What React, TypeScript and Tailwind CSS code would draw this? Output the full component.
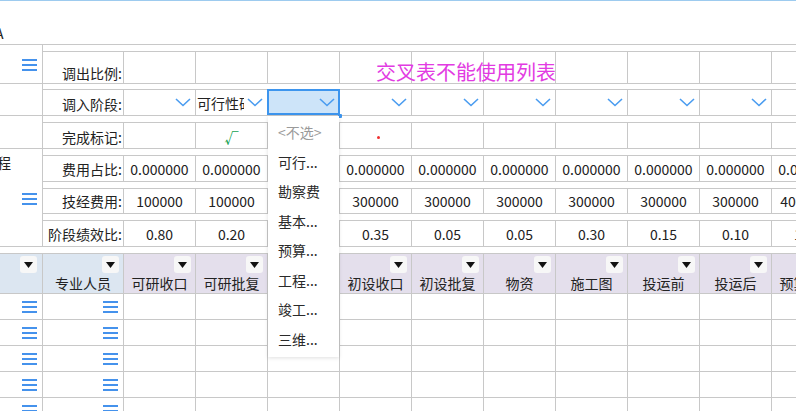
import React from "react";

const fees = ["0.000000", "0.000000", "", "0.000000", "0.000000", "0.000000", "0.000000", "0.000000", "0.000000", "0.000000", "0.000000"];
const costs = ["100000", "100000", "", "300000", "300000", "300000", "300000", "300000", "300000", "4000000", "300000"];
const ratios = ["0.80", "0.20", "", "0.35", "0.05", "0.05", "0.30", "0.15", "0.10", "1.00", "0.00"];
const heads = ["可研收口", "可研批复", "", "初设收口", "初设批复", "物资", "施工图", "投运前", "投运后", "预算评审", "结算"];
const menuItems = ["可行...", "勘察费", "基本...", "预算...", "工程...", "竣工...", "三维..."];

// ---------------- ICONS ----------------
function MenuIcon() {
  return (
    <svg width="15" height="12" viewBox="0 0 15 12">
      <rect x="0" y="0" width="15" height="2" fill="#4592ec" />
      <rect x="0" y="5" width="15" height="2" fill="#4592ec" />
      <rect x="0" y="10" width="15" height="2" fill="#4592ec" />
    </svg>
  );
}

function Chevron() {
  return (
    <svg width="16" height="9" viewBox="0 0 16 9">
      <polyline points="1,1 8,7.5 15,1" fill="none" stroke="#4a9cf0" strokeWidth="1.6" />
    </svg>
  );
}

function FilterBtn() {
  return (
    <div className="w-[17px] h-[17px] rounded-[3px] bg-[#f7f7f7] flex items-center justify-center">
      <svg width="9" height="6" viewBox="0 0 9 6">
        <polygon points="0,0 9,0 4.5,6" fill="#111" />
      </svg>
    </div>
  );
}

function ValueRow({ label, values }: { label: string; values: string[] }) {
  return (
    <>
      <div className="w-[81px] shrink-0 border-r border-[#c8c8c8] flex items-center justify-end pr-[1px] leading-[20px]">
        {label}
      </div>
      {values.map((v, i) => (
        <div
          key={i}
          className="w-[72px] shrink-0 border-r border-[#c8c8c8] flex items-center justify-center leading-[20px]"
        >
          {v}
        </div>
      ))}
    </>
  );
}

export default function App() {
  return (
    <div className="w-[796px] h-[411px] overflow-hidden bg-white border-t border-[#9dcbef] font-['Noto_Sans_CJK_SC','Noto_Sans',sans-serif] text-[14px] text-[#222]">
      {/* ================= TOP ================= */}
      <div className="h-[44px] border-b border-[#c8c8c8] pt-[22px] leading-[20px]">
        <span className="ml-[-5px]">A</span>
      </div>

      {/* 调出比例 */}
      <div className="flex w-max h-[39px] border-b border-[#c8c8c8]">
        <div className="w-[43px] shrink-0 border-r border-[#c8c8c8] flex justify-end pr-[5px] pt-[14px]">
          <MenuIcon />
        </div>
        <div className="pt-[6px]">
          <div className="relative flex h-[32px] border-t border-[#c8c8c8]">
            <div className="w-[81px] shrink-0 border-r border-[#c8c8c8] flex items-end justify-end pr-[1px] leading-[20px]">
              调出比例:
            </div>
            {fees.map((_, i) => (
              <div key={i} className="w-[72px] shrink-0 border-r border-[#c8c8c8]" />
            ))}
            <span className="absolute left-[333px] top-[8px] text-[20px] leading-[24px] text-[#e23be2] whitespace-nowrap">
              交叉表不能使用列表
            </span>
          </div>
        </div>
      </div>

      {/* 调入阶段 */}
      <div className="flex w-max h-[32px] border-b border-[#c8c8c8]">
        <div className="w-[43px] shrink-0 border-r border-[#c8c8c8]" />
        <div className="pt-[5px]">
          <div className="flex h-[26px] border-t border-[#c8c8c8]">
            <div className="w-[81px] shrink-0 border-r border-[#c8c8c8] flex items-center justify-end pr-[1px] pt-[3px] leading-[20px]">
              调入阶段:
            </div>
            {fees.map((_, i) => {
              if (i === 1) {
                return (
                  <div key={i} className="w-[72px] shrink-0 border-r border-[#c8c8c8] flex items-center pl-[1px] pr-[4px]">
                    <span className="flex-1 overflow-hidden whitespace-nowrap mr-[3px] leading-[20px]">可行性研究</span>
                    <Chevron />
                  </div>
                );
              }
              if (i === 2) {
                return (
                  <div key={i} className="relative w-[72px] shrink-0 border-r border-[#c8c8c8]">
                    <div className="absolute left-[-1px] top-[-1px] w-[73px] h-[26px] border-2 border-[#3d95ee] bg-[#cde4f9] flex items-center justify-end pr-[3px]">
                      <Chevron />
                    </div>
                    <div className="absolute left-[70px] top-[24px] w-[4px] h-[4px] rounded-[1px] bg-[#3d95ee]" />
                    {/* ---------- DROPDOWN ---------- */}
                    <div className="absolute left-0 top-[26px] w-[71px] h-[241px] bg-white shadow-[0_1px_4px_rgba(0,0,0,0.13)] pt-[2px] z-30">
                      <div className="h-[29.5px] flex items-center pl-[10px] text-[#9a9a9a]">&lt;不选&gt;</div>
                      {menuItems.map((m) => (
                        <div key={m} className="h-[29.5px] flex items-center pl-[10px] text-[#2a2a2a]">
                          {m}
                        </div>
                      ))}
                    </div>
                  </div>
                );
              }
              return (
                <div key={i} className="w-[72px] shrink-0 border-r border-[#c8c8c8] flex items-center justify-end pr-[4px]">
                  <Chevron />
                </div>
              );
            })}
          </div>
        </div>
      </div>

      {/* 完成标记 */}
      <div className="flex w-max h-[33px] border-b border-[#c8c8c8]">
        <div className="w-[43px] shrink-0 border-r border-[#c8c8c8]" />
        <div className="pt-[6px]">
          <div className="flex h-[26px] border-t border-[#c8c8c8]">
            <div className="w-[81px] shrink-0 border-r border-[#c8c8c8] flex items-center justify-end pr-[1px] pt-[3px] leading-[20px]">
              完成标记:
            </div>
            {fees.map((_, i) => (
              <div key={i} className="w-[72px] shrink-0 border-r border-[#c8c8c8] flex items-center justify-center">
                {i === 1 && <span className="text-[#16a152] font-bold leading-[20px] pt-[2px]">√</span>}
                {i === 3 && <span className="w-[3px] h-[3px] rounded-full bg-[#f03030] mt-[4px] ml-[5px]" />}
              </div>
            ))}
          </div>
        </div>
      </div>

      {/* 费用 / 技经 / 绩效 */}
      <div className="flex w-max border-b border-[#c8c8c8]">
        <div className="w-[43px] shrink-0 border-r border-[#c8c8c8] flex flex-col">
          <span className="ml-[-17px] pt-[3px] leading-[20px] whitespace-nowrap">工程</span>
          <div className="self-end mr-[5px] mt-[21px]">
            <MenuIcon />
          </div>
        </div>
        <div>
          <div className="pt-[6px]">
            <div className="flex h-[27px] border-t border-b border-[#c8c8c8]">
              <ValueRow label="费用占比:" values={fees} />
            </div>
          </div>
          <div className="pt-[6px]">
            <div className="flex h-[26px] border-t border-b border-[#c8c8c8]">
              <ValueRow label="技经费用:" values={costs} />
            </div>
          </div>
          <div className="pt-[6px]">
            <div className="flex h-[26px] border-t border-[#c8c8c8]">
              <ValueRow label="阶段绩效比:" values={ratios} />
            </div>
          </div>
        </div>
      </div>

      {/* ================= LIST ================= */}
      <div className="mt-[6px] w-max">
        <div className="flex h-[41px] border-t border-b border-[#c8c8c8]">
          <div className="w-[43px] shrink-0 border-r border-[#c8c8c8] bg-[#dce6f1] flex flex-col items-end pt-[2px] pr-[5px]">
            <FilterBtn />
          </div>
          <div className="w-[81px] shrink-0 border-r border-[#c8c8c8] bg-[#dce6f1] flex flex-col pt-[2px]">
            <div className="self-end mr-[4px]">
              <FilterBtn />
            </div>
            <div className="mt-auto text-center leading-[18px] pb-[1px]">专业人员</div>
          </div>
          {heads.map((h, i) => (
            <div key={i} className="w-[72px] shrink-0 border-r border-[#c8c8c8] bg-[#e4dfec] flex flex-col pt-[2px]">
              <div className="self-end mr-[4px]">
                <FilterBtn />
              </div>
              <div className="mt-auto text-center leading-[18px] pb-[1px] whitespace-nowrap">{h}</div>
            </div>
          ))}
        </div>
        {[0, 1, 2, 3, 4].map((r) => (
          <div key={r} className="flex h-[26px] border-b border-[#c8c8c8]">
            <div className="w-[43px] shrink-0 border-r border-[#c8c8c8] flex items-center justify-end pr-[5px]">
              <MenuIcon />
            </div>
            <div className="w-[81px] shrink-0 border-r border-[#c8c8c8] flex items-center justify-end pr-[5px]">
              <MenuIcon />
            </div>
            {heads.map((_, i) => (
              <div key={i} className="w-[72px] shrink-0 border-r border-[#c8c8c8]" />
            ))}
          </div>
        ))}
      </div>
    </div>
  );
}
